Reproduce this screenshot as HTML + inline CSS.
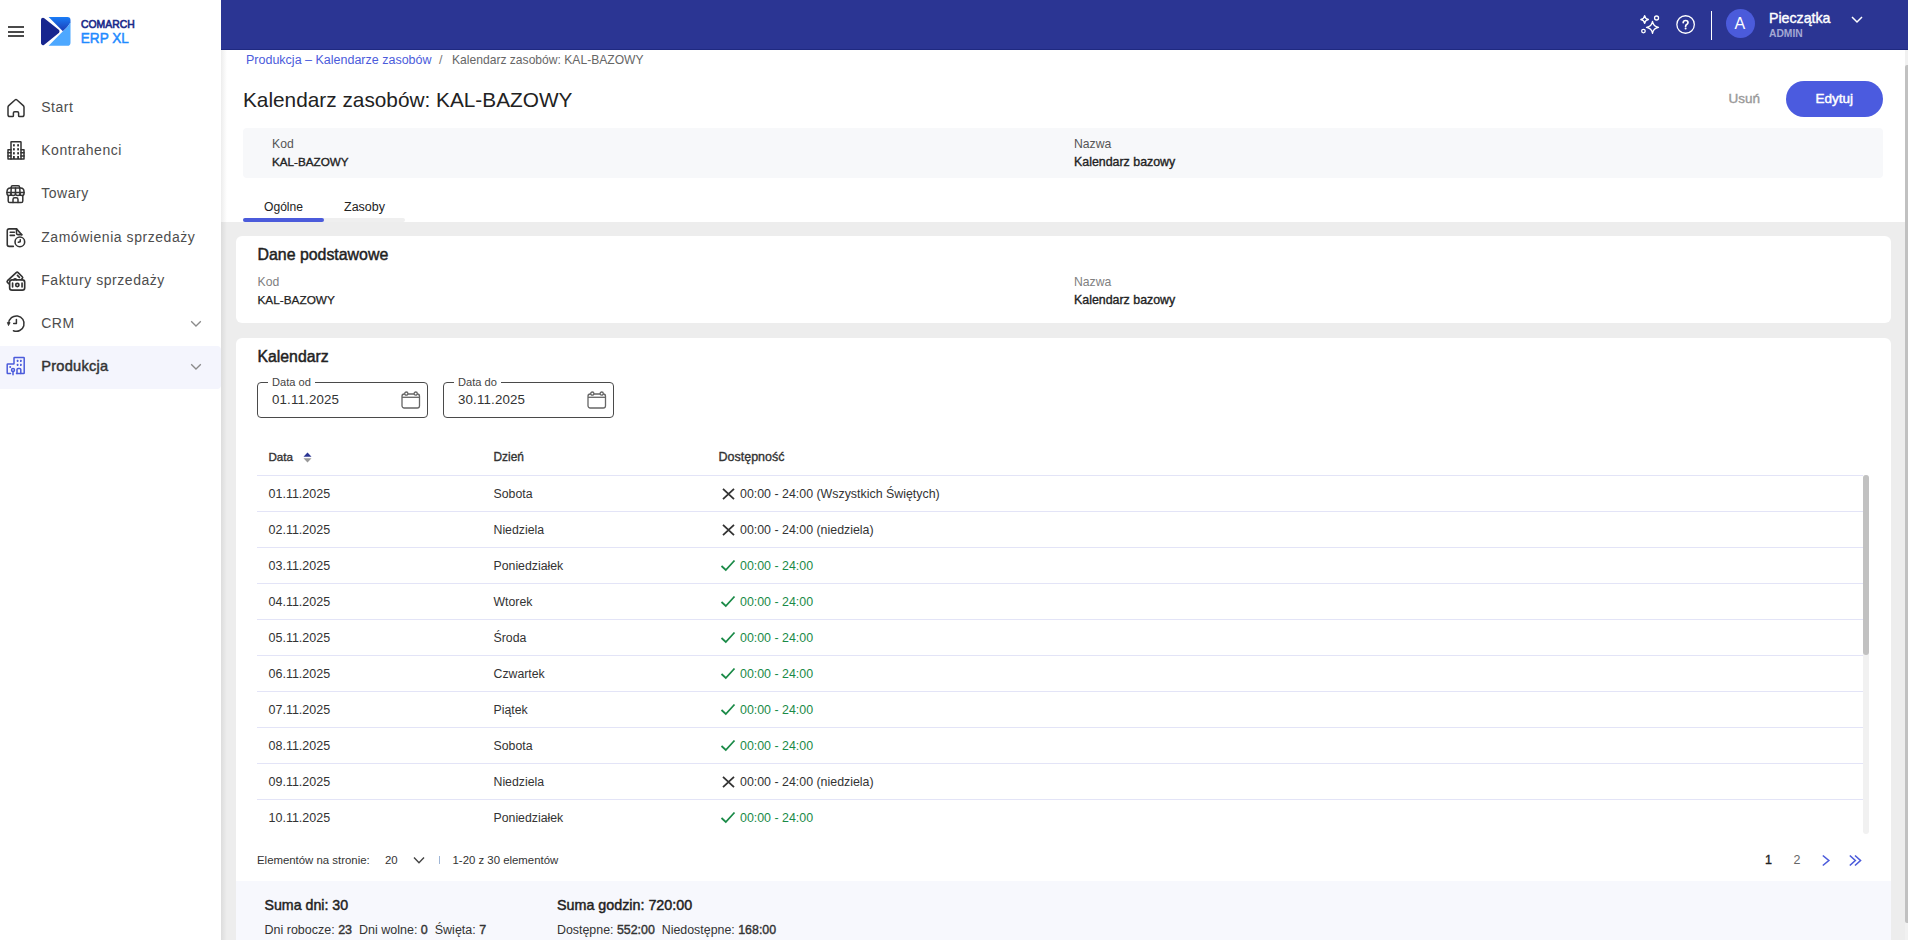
<!DOCTYPE html>
<html><head><meta charset="utf-8"><title>Kalendarz zasobów</title><style>*{margin:0;padding:0}
html,body{width:1908px;height:940px;overflow:hidden;background:#fff}
body{position:relative;font-family:"Liberation Sans",sans-serif}
.t{position:absolute;line-height:1;white-space:pre}
.r{position:absolute}
.s{position:absolute;overflow:visible}
b{font-weight:400;-webkit-text-stroke:0.4px #333}
</style></head><body>
<div class="r" style="left:0px;top:0px;width:221px;height:940px;background:#fff;"></div>
<div class="r" style="left:8px;top:26px;width:16px;height:2px;background:#4a4a4a;"></div>
<div class="r" style="left:8px;top:30.5px;width:16px;height:2px;background:#4a4a4a;"></div>
<div class="r" style="left:8px;top:35px;width:16px;height:2px;background:#4a4a4a;"></div>
<svg class="s" style="left:41px;top:17px;" width="30" height="29" viewBox="0 0 30 29">
<defs><linearGradient id="lg1" gradientUnits="userSpaceOnUse" x1="0" y1="0" x2="0" y2="14"><stop offset="0" stop-color="#1a7df7"/><stop offset="1" stop-color="#1b3cb6"/></linearGradient></defs>
<path d="M2 2.7 L16.5 14.4 L2 26.1 Z" fill="#17268f" stroke="#17268f" stroke-width="4" stroke-linejoin="round"/>
<path d="M7.6 0 L26.4 0 Q29.5 0 29.5 3.1 L29.5 5.4 Q27.2 9.6 21.9 14.3 Z" fill="url(#lg1)"/>
<path d="M21.9 14.3 Q27.2 9.6 29.5 5.4 L29.5 25.7 Q29.5 28.8 26.4 28.8 L7.6 28.8 Z" fill="#4da8ff"/>
</svg>
<div class="t" style="left:81.00px;top:20.00px;font-size:10.4px;font-weight:400;color:#1b2a8a;-webkit-text-stroke:0.6px #1b2a8a;transform:scaleY(1.05);transform-origin:0 86%;">COMARCH</div>
<div class="t" style="left:80.80px;top:32.00px;font-size:13.6px;font-weight:400;color:#1f8bff;-webkit-text-stroke:0.45px #1f8bff;transform:scaleY(1.1);transform-origin:0 86%;">ERP XL</div>
<div class="r" style="left:0px;top:346px;width:221px;height:43px;background:#f4f5fd;border-radius:0 4px 4px 0;"></div>
<div class="t" style="left:41.20px;top:100.00px;font-size:14px;font-weight:400;color:#4d4d4d;letter-spacing:0.55px;">Start</div>
<div class="t" style="left:41.20px;top:143.00px;font-size:14px;font-weight:400;color:#4d4d4d;letter-spacing:0.55px;">Kontrahenci</div>
<div class="t" style="left:41.20px;top:186.00px;font-size:14px;font-weight:400;color:#4d4d4d;letter-spacing:0.55px;">Towary</div>
<div class="t" style="left:41.20px;top:230.00px;font-size:14px;font-weight:400;color:#4d4d4d;letter-spacing:0.55px;">Zamówienia sprzedaży</div>
<div class="t" style="left:41.20px;top:273.00px;font-size:14px;font-weight:400;color:#4d4d4d;letter-spacing:0.55px;">Faktury sprzedaży</div>
<div class="t" style="left:41.20px;top:316.00px;font-size:14px;font-weight:400;color:#4d4d4d;letter-spacing:0.55px;">CRM</div>
<div class="t" style="left:41.20px;top:359.00px;font-size:14.6px;font-weight:400;color:#333;letter-spacing:0.25px;-webkit-text-stroke:0.45px #333;">Produkcja</div>
<svg class="s" style="left:190px;top:319.7px;" width="12" height="8" viewBox="0 0 12 8"><path d="M1.2 1.2 L6 6 L10.8 1.2" fill="none" stroke="#8a8a8a" stroke-width="1.3"/></svg>
<svg class="s" style="left:190px;top:362.8px;" width="12" height="8" viewBox="0 0 12 8"><path d="M1.2 1.2 L6 6 L10.8 1.2" fill="none" stroke="#8a8a8a" stroke-width="1.3"/></svg>
<svg class="s" style="left:6.5px;top:98.5px;" width="18" height="19" viewBox="0 0 18 19"><path d="M1 8.2 Q1 7.3 1.7 6.6 L8 1 Q9 0.2 10 1 L16.3 6.6 Q17 7.3 17 8.2 L17 15.8 Q17 17.6 15.2 17.6 L12.4 17.6 Q11.6 17.6 11.6 16.8 L11.6 14 Q11.6 12.8 10.4 12.8 L7.6 12.8 Q6.4 12.8 6.4 14 L6.4 16.8 Q6.4 17.6 5.6 17.6 L2.8 17.6 Q1 17.6 1 15.8 Z" fill="none" stroke="#333" stroke-width="1.5" stroke-linejoin="round" stroke-linecap="round"/></svg>
<svg class="s" style="left:7px;top:141px;" width="18" height="19" viewBox="0 0 18 19"><path d="M4 18 L4 1.2 Q4 0.8 4.4 0.8 L13.6 0.8 Q14 0.8 14 1.2 L14 18" fill="none" stroke="#333" stroke-width="1.5" stroke-linejoin="round" stroke-linecap="round"/>
<path d="M1 18 L1 8.8 L4 8.8 M14 8.8 L17 8.8 L17 18 L1 18" fill="none" stroke="#333" stroke-width="1.5" stroke-linejoin="round" stroke-linecap="round"/>
<g fill="#333"><rect x="6" y="3.2" width="1.8" height="2.2"/><rect x="10.2" y="3.2" width="1.8" height="2.2"/>
<rect x="6" y="7.2" width="1.8" height="2.2"/><rect x="10.2" y="7.2" width="1.8" height="2.2"/>
<rect x="6" y="11.2" width="1.8" height="2.2"/><rect x="10.2" y="11.2" width="1.8" height="2.2"/>
<rect x="6" y="15" width="1.8" height="3"/><rect x="10.2" y="15" width="1.8" height="3"/></g>
<path d="M1 11.8 L4 11.8 M1 15 L4 15 M14 11.8 L17 11.8 M14 15 L17 15" fill="none" stroke="#333" stroke-width="1.5" stroke-linejoin="round" stroke-linecap="round"/></svg>
<svg class="s" style="left:6px;top:185px;" width="19" height="19" viewBox="0 0 19 19"><path d="M5.2 2.8 L5.2 2.2 Q5.2 0.8 6.6 0.8 L12.2 0.8 Q13.6 0.8 13.6 2.2 L13.6 2.8" fill="none" stroke="#333" stroke-width="1.5" stroke-linejoin="round" stroke-linecap="round"/>
<path d="M1 8.5 L1 6.8 Q1 3 4.4 3 L14.6 3 Q18 3 18 6.8 L18 8.5 Q18 10.5 16 10.5 Q14 10.5 14 8.5 Q14 10.5 11.8 10.5 Q9.5 10.5 9.5 8.5 Q9.5 10.5 7.2 10.5 Q5 10.5 5 8.5 Q5 10.5 3 10.5 Q1 10.5 1 8.5 Z" fill="none" stroke="#333" stroke-width="1.5" stroke-linejoin="round" stroke-linecap="round"/>
<path d="M1 7.5 L18 7.5 M5.2 3 L5 8.5 M9.5 3 L9.5 8.5 M13.8 3 L14 8.5" fill="none" stroke="#333" stroke-width="1.5" stroke-linejoin="round" stroke-linecap="round"/>
<path d="M2.2 10.5 L2.2 16 Q2.2 17.6 3.8 17.6 L15.2 17.6 Q16.8 17.6 16.8 16 L16.8 10.5" fill="none" stroke="#333" stroke-width="1.5" stroke-linejoin="round" stroke-linecap="round"/>
<path d="M7 17.6 L7 14.5 Q7 12.8 8.7 12.8 L10.3 12.8 Q12 12.8 12 14.5 L12 17.6" fill="none" stroke="#333" stroke-width="1.5" stroke-linejoin="round" stroke-linecap="round"/></svg>
<svg class="s" style="left:6px;top:228px;" width="18.9" height="20" viewBox="0 0 18 19"><path d="M7 17.5 L3 17.5 Q1.2 17.5 1.2 15.7 L1.2 2.6 Q1.2 0.8 3 0.8 L10 0.8 L15 6.5" fill="none" stroke="#333" stroke-width="1.5" stroke-linejoin="round" stroke-linecap="round"/>
<path d="M10 0.8 L10 5 Q10 6.3 11.3 6.3 L15 6.3" fill="none" stroke="#333" stroke-width="1.5" stroke-linejoin="round" stroke-linecap="round"/>
<path d="M4 4 L8 4 M4 7 L8 7" fill="none" stroke="#333" stroke-width="1.5" stroke-linejoin="round" stroke-linecap="round"/>
<circle cx="13.2" cy="13.2" r="4.6" fill="none" stroke="#333" stroke-width="1.5" stroke-linejoin="round" stroke-linecap="round"/>
<path d="M13.6 11.3 L13.5 13 L11.8 13.5" fill="none" stroke="#333" stroke-width="1.5" stroke-linejoin="round" stroke-linecap="round"/></svg>
<svg class="s" style="left:6px;top:270.5px;" width="19.8" height="21" preserveAspectRatio="none" viewBox="0 0 18 19"><path d="M2.5 11.5 L1.4 10.4 Q0.6 9.6 1.4 8.8 L9.3 1.5 Q10.2 0.7 11 1.5 L14.8 5.2 Q15.6 6 14.8 6.8 L13.8 7.8" fill="none" stroke="#333" stroke-width="1.5" stroke-linejoin="round" stroke-linecap="round"/>
<path d="M10.4 4 L12.2 5.8" fill="none" stroke="#333" stroke-width="1.5" stroke-linejoin="round" stroke-linecap="round"/>
<path d="M7 7.8 Q8.2 6.5 9.6 7.8" fill="none" stroke="#333" stroke-width="1.5" stroke-linejoin="round" stroke-linecap="round"/>
<rect x="3.3" y="8" width="13.7" height="9.3" rx="2.2" fill="none" stroke="#333" stroke-width="1.5" stroke-linejoin="round" stroke-linecap="round"/>
<path d="M6 11 L6 14.4 M14.6 11 L14.6 14.4" fill="none" stroke="#333" stroke-width="1.5" stroke-linejoin="round" stroke-linecap="round"/>
<circle cx="10.3" cy="12.7" r="1.5" fill="none" stroke="#333" stroke-width="1.5" stroke-linejoin="round" stroke-linecap="round"/></svg>
<svg class="s" style="left:2px;top:308px;" width="30" height="30" viewBox="0 0 30 30"><path d="M6.7 15.4 A7.7 7.7 0 1 1 11.4 22.7" fill="none" stroke="#333" stroke-width="1.5" stroke-linecap="round"/>
<path d="M5.3 14.4 L8.1 14.6 L6.5 17.6 Z" fill="#333" stroke="#333" stroke-width="0.8" stroke-linejoin="round"/>
<path d="M14.4 11.6 L14.4 15.6 L11.7 15.6" fill="none" stroke="#333" stroke-width="1.5" stroke-linejoin="round" stroke-linecap="round"/></svg>
<svg class="s" style="left:6.3px;top:356px;" width="20" height="20" viewBox="0 0 20 20"><g fill="none" stroke="#4b5bdb" stroke-width="1.5" stroke-linejoin="round" stroke-linecap="round">
<path d="M4.5 17.6 L1.7 17.6 Q1.2 17.6 1.2 17 L1.2 8.6 Q1.2 8 1.8 8 L7.5 8 Q8 8 8 7.5 L8 2 Q8 1.4 8.6 1.4 L17.6 1.4 Q18.2 1.4 18.2 2 L18.2 17 Q18.2 17.6 17.6 17.6 L10.5 17.6"/>
<path d="M11 17.6 L11 13.6 Q11 12.4 12.2 12.4 L13.6 12.4 Q14.8 12.4 14.8 13.6 L14.8 17.6"/>
<circle cx="7" cy="14" r="1.5"/><path d="M7 15.5 L7 18.8"/></g>
<g fill="#4b5bdb"><rect x="10.8" y="3.8" width="1.6" height="2.2" rx="0.5"/><rect x="14" y="3.8" width="1.6" height="2.2" rx="0.5"/>
<rect x="10.8" y="7.8" width="1.6" height="2.2" rx="0.5"/><rect x="14" y="7.8" width="1.6" height="2.2" rx="0.5"/><circle cx="4.2" cy="11" r="1"/></g></svg>
<div class="r" style="left:221px;top:50px;width:1684px;height:172px;background:#fff;"></div>
<div class="r" style="left:221px;top:222px;width:1684px;height:718px;background:#ededed;"></div>
<div class="r" style="left:221px;top:50px;width:6px;height:890px;background:linear-gradient(to right, rgba(0,0,0,0.07), rgba(0,0,0,0));"></div>
<div class="r" style="left:1905px;top:50px;width:3px;height:890px;background:#f1f1f1;"></div>
<div class="r" style="left:1905px;top:65px;width:3px;height:858px;background:#c1c1c1;border-radius:2px 0 0 2px;"></div>
<div class="t" style="left:246.00px;top:54.00px;font-size:12.5px;font-weight:400;color:#4b5bdb;">Produkcja – Kalendarze zasobów</div>
<div class="t" style="left:439.00px;top:54.00px;font-size:12.5px;font-weight:400;color:#777;">/</div>
<div class="t" style="left:452.00px;top:54.00px;font-size:12.1px;font-weight:400;color:#666;">Kalendarz zasobów: KAL-BAZOWY</div>
<div class="t" style="left:243.00px;top:90.00px;font-size:20.8px;font-weight:400;color:#222;">Kalendarz zasobów: KAL-BAZOWY</div>
<div class="t" style="left:1728.50px;top:92.00px;font-size:13.5px;font-weight:400;color:#9a9a9a;-webkit-text-stroke:0.4px #9a9a9a;">Usuń</div>
<div class="r" style="left:1786px;top:81px;width:97px;height:36px;background:#4b5bdf;border-radius:18px;"></div>
<div class="t" style="left:1815.50px;top:92.00px;font-size:13.5px;font-weight:400;color:#fff;-webkit-text-stroke:0.45px #fff;">Edytuj</div>
<div class="r" style="left:243px;top:128px;width:1640px;height:50px;background:#f7f8fa;border-radius:4px;"></div>
<div class="t" style="left:272.00px;top:138.00px;font-size:12.2px;font-weight:400;color:#555;">Kod</div>
<div class="t" style="left:272.00px;top:156.00px;font-size:11.7px;font-weight:400;color:#222;-webkit-text-stroke:0.35px #222;">KAL-BAZOWY</div>
<div class="t" style="left:1074.00px;top:138.00px;font-size:12.2px;font-weight:400;color:#555;">Nazwa</div>
<div class="t" style="left:1074.00px;top:156.00px;font-size:12.4px;font-weight:400;color:#222;-webkit-text-stroke:0.35px #222;">Kalendarz bazowy</div>
<div class="t" style="left:264.00px;top:201.00px;font-size:12.1px;font-weight:400;color:#222;">Ogólne</div>
<div class="t" style="left:344.00px;top:201.00px;font-size:12.5px;font-weight:400;color:#222;">Zasoby</div>
<div class="r" style="left:243px;top:218px;width:162px;height:4px;background:#efefef;border-radius:2px;"></div>
<div class="r" style="left:243px;top:218px;width:81px;height:4px;background:#4b5bdb;border-radius:2px;"></div>
<div class="r" style="left:236px;top:236px;width:1655px;height:86.5px;background:#fff;border-radius:6px;"></div>
<div class="t" style="left:257.50px;top:247.00px;font-size:15.9px;font-weight:400;color:#222;-webkit-text-stroke:0.45px #222;">Dane podstawowe</div>
<div class="t" style="left:257.50px;top:276.00px;font-size:12.2px;font-weight:400;color:#808080;">Kod</div>
<div class="t" style="left:257.50px;top:295.00px;font-size:11.8px;font-weight:400;color:#222;-webkit-text-stroke:0.25px #222;">KAL-BAZOWY</div>
<div class="t" style="left:1074.00px;top:276.00px;font-size:12.2px;font-weight:400;color:#808080;">Nazwa</div>
<div class="t" style="left:1074.00px;top:294.00px;font-size:12.4px;font-weight:400;color:#222;-webkit-text-stroke:0.35px #222;">Kalendarz bazowy</div>
<div class="r" style="left:236px;top:338px;width:1655px;height:610px;background:#fff;border-radius:6px;"></div>
<div class="t" style="left:257.50px;top:349.00px;font-size:15.8px;font-weight:400;color:#222;-webkit-text-stroke:0.45px #222;">Kalendarz</div>
<div class="r" style="left:221px;top:0px;width:1687px;height:50px;background:#2b3593;"></div>
<div class="r" style="left:221px;top:49px;width:1687px;height:1px;background:#1f2980;"></div>
<svg class="s" style="left:1636px;top:11px;" width="28" height="28" viewBox="0 0 28 28"><g fill="none" stroke="#fff" stroke-width="1.3" stroke-linejoin="round"><path d="M8.64 4.7 Q9.172 7.968 12.440000000000001 8.5 Q9.172 9.032 8.64 12.3 Q8.108 9.032 4.840000000000001 8.5 Q8.108 7.968 8.64 4.7 Z"/><path d="M16.5 10.399999999999999 Q17.34 15.559999999999999 22.5 16.4 Q17.34 17.24 16.5 22.4 Q15.66 17.24 10.5 16.4 Q15.66 15.559999999999999 16.5 10.399999999999999 Z"/><circle cx="20.55" cy="7" r="2"/><circle cx="7.45" cy="20.1" r="1.8"/></g></svg>
<svg class="s" style="left:1670px;top:10px;" width="30" height="30" viewBox="0 0 30 30"><circle cx="15.6" cy="14.5" r="8.75" fill="none" stroke="#fff" stroke-width="1.3"/>
<path d="M13.2 12.6 Q13.3 10.5 15.6 10.5 Q18 10.5 18 12.6 Q18 13.8 16.7 14.5 Q15.6 15.1 15.6 16.4" fill="none" stroke="#fff" stroke-width="1.7" stroke-linecap="round"/>
<circle cx="15.6" cy="18.6" r="1" fill="#fff"/></svg>
<div class="r" style="left:1711px;top:11px;width:1px;height:29px;background:#ffffff;"></div>
<div class="r" style="left:1726px;top:9px;width:29px;height:29px;background:#4b5bdb;border-radius:50%;"></div>
<div class="t" style="left:1734.50px;top:16.00px;font-size:16px;font-weight:400;color:#fff;">A</div>
<div class="t" style="left:1769.00px;top:11.00px;font-size:14.2px;font-weight:400;color:#fff;-webkit-text-stroke:0.4px #fff;">Pieczątka</div>
<div class="t" style="left:1769.00px;top:29.00px;font-size:10.3px;font-weight:700;color:#a3a8d4;">ADMIN</div>
<svg class="s" style="left:1850px;top:15px;" width="14" height="10" viewBox="0 0 14 10"><path d="M2 2 L7 7 L12 2" fill="none" stroke="#fff" stroke-width="1.5"/></svg>
<div class="r" style="left:257px;top:382px;width:171px;height:36px;background:transparent;border:1.3px solid #4a4a4a;border-radius:4px;box-sizing:border-box;"></div>
<div class="r" style="left:268px;top:380px;width:47px;height:4px;background:#fff;"></div>
<div class="t" style="left:272.00px;top:377.00px;font-size:11.1px;font-weight:400;color:#444;">Data od</div>
<div class="t" style="left:272.00px;top:393.00px;font-size:13.3px;font-weight:400;color:#333;letter-spacing:0.15px;">01.11.2025</div>
<svg class="s" style="left:400.5px;top:390.5px;" width="20" height="18" viewBox="0 0 20 18"><g fill="none" stroke="#666" stroke-width="1.3" stroke-linejoin="round">
<rect x="1" y="3" width="17.5" height="14" rx="2.2"/><path d="M1 6.3 L18.5 6.3"/>
<circle cx="5.3" cy="2.6" r="1.6" fill="#fff"/><circle cx="14.7" cy="2.6" r="1.6" fill="#fff"/></g></svg>
<div class="r" style="left:443px;top:382px;width:171px;height:36px;background:transparent;border:1.3px solid #4a4a4a;border-radius:4px;box-sizing:border-box;"></div>
<div class="r" style="left:454px;top:380px;width:47px;height:4px;background:#fff;"></div>
<div class="t" style="left:458.00px;top:377.00px;font-size:11.1px;font-weight:400;color:#444;">Data do</div>
<div class="t" style="left:458.00px;top:393.00px;font-size:13.3px;font-weight:400;color:#333;letter-spacing:0.15px;">30.11.2025</div>
<svg class="s" style="left:586.5px;top:390.5px;" width="20" height="18" viewBox="0 0 20 18"><g fill="none" stroke="#666" stroke-width="1.3" stroke-linejoin="round">
<rect x="1" y="3" width="17.5" height="14" rx="2.2"/><path d="M1 6.3 L18.5 6.3"/>
<circle cx="5.3" cy="2.6" r="1.6" fill="#fff"/><circle cx="14.7" cy="2.6" r="1.6" fill="#fff"/></g></svg>
<div class="t" style="left:268.50px;top:451.00px;font-size:11.6px;font-weight:400;color:#333;-webkit-text-stroke:0.35px #333;">Data</div>
<svg class="s" style="left:303px;top:452px;" width="9" height="11" viewBox="0 0 9 11"><path d="M4.5 0.5 L8.5 4.8 L0.5 4.8 Z" fill="#2b3593"/><path d="M0.5 6.2 L8.5 6.2 L4.5 10.5 Z" fill="#999"/></svg>
<div class="t" style="left:493.50px;top:452.00px;font-size:11.9px;font-weight:400;color:#333;-webkit-text-stroke:0.35px #333;">Dzień</div>
<div class="t" style="left:718.50px;top:451.00px;font-size:12.5px;font-weight:400;color:#333;-webkit-text-stroke:0.35px #333;">Dostępność</div>
<div class="r" style="left:257px;top:475px;width:1606px;height:1px;background:#e3e4f7;"></div>
<div class="t" style="left:268.50px;top:488.00px;font-size:12.5px;font-weight:400;color:#333;">01.11.2025</div>
<div class="t" style="left:493.50px;top:488.00px;font-size:12.3px;font-weight:400;color:#333;">Sobota</div>
<svg class="s" style="left:722px;top:487.5px;" width="13" height="12" viewBox="0 0 13 12"><path d="M1 0.8 L12 11.2 M12 0.8 L1 11.2" fill="none" stroke="#333" stroke-width="1.8"/></svg>
<div class="t" style="left:740.00px;top:488.00px;font-size:12.4px;font-weight:400;color:#333;">00:00 - 24:00 (Wszystkich Świętych)</div>
<div class="r" style="left:257px;top:511px;width:1606px;height:1px;background:#e3e4f7;"></div>
<div class="t" style="left:268.50px;top:524.00px;font-size:12.5px;font-weight:400;color:#333;">02.11.2025</div>
<div class="t" style="left:493.50px;top:524.00px;font-size:12.3px;font-weight:400;color:#333;">Niedziela</div>
<svg class="s" style="left:722px;top:523.5px;" width="13" height="12" viewBox="0 0 13 12"><path d="M1 0.8 L12 11.2 M12 0.8 L1 11.2" fill="none" stroke="#333" stroke-width="1.8"/></svg>
<div class="t" style="left:740.00px;top:524.00px;font-size:12.4px;font-weight:400;color:#333;">00:00 - 24:00 (niedziela)</div>
<div class="r" style="left:257px;top:547px;width:1606px;height:1px;background:#e3e4f7;"></div>
<div class="t" style="left:268.50px;top:560.00px;font-size:12.5px;font-weight:400;color:#333;">03.11.2025</div>
<div class="t" style="left:493.50px;top:560.00px;font-size:12.3px;font-weight:400;color:#333;">Poniedziałek</div>
<svg class="s" style="left:720px;top:559px;" width="16" height="13" viewBox="0 0 16 13"><path d="M1.5 7 L5.8 11 L14.5 1.5" fill="none" stroke="#1a8a47" stroke-width="1.8"/></svg>
<div class="t" style="left:740.00px;top:560.00px;font-size:12.4px;font-weight:400;color:#1a8a47;">00:00 - 24:00</div>
<div class="r" style="left:257px;top:583px;width:1606px;height:1px;background:#e3e4f7;"></div>
<div class="t" style="left:268.50px;top:596.00px;font-size:12.5px;font-weight:400;color:#333;">04.11.2025</div>
<div class="t" style="left:493.50px;top:596.00px;font-size:12.3px;font-weight:400;color:#333;">Wtorek</div>
<svg class="s" style="left:720px;top:595px;" width="16" height="13" viewBox="0 0 16 13"><path d="M1.5 7 L5.8 11 L14.5 1.5" fill="none" stroke="#1a8a47" stroke-width="1.8"/></svg>
<div class="t" style="left:740.00px;top:596.00px;font-size:12.4px;font-weight:400;color:#1a8a47;">00:00 - 24:00</div>
<div class="r" style="left:257px;top:619px;width:1606px;height:1px;background:#e3e4f7;"></div>
<div class="t" style="left:268.50px;top:632.00px;font-size:12.5px;font-weight:400;color:#333;">05.11.2025</div>
<div class="t" style="left:493.50px;top:632.00px;font-size:12.3px;font-weight:400;color:#333;">Środa</div>
<svg class="s" style="left:720px;top:631px;" width="16" height="13" viewBox="0 0 16 13"><path d="M1.5 7 L5.8 11 L14.5 1.5" fill="none" stroke="#1a8a47" stroke-width="1.8"/></svg>
<div class="t" style="left:740.00px;top:632.00px;font-size:12.4px;font-weight:400;color:#1a8a47;">00:00 - 24:00</div>
<div class="r" style="left:257px;top:655px;width:1606px;height:1px;background:#e3e4f7;"></div>
<div class="t" style="left:268.50px;top:668.00px;font-size:12.5px;font-weight:400;color:#333;">06.11.2025</div>
<div class="t" style="left:493.50px;top:668.00px;font-size:12.3px;font-weight:400;color:#333;">Czwartek</div>
<svg class="s" style="left:720px;top:667px;" width="16" height="13" viewBox="0 0 16 13"><path d="M1.5 7 L5.8 11 L14.5 1.5" fill="none" stroke="#1a8a47" stroke-width="1.8"/></svg>
<div class="t" style="left:740.00px;top:668.00px;font-size:12.4px;font-weight:400;color:#1a8a47;">00:00 - 24:00</div>
<div class="r" style="left:257px;top:691px;width:1606px;height:1px;background:#e3e4f7;"></div>
<div class="t" style="left:268.50px;top:704.00px;font-size:12.5px;font-weight:400;color:#333;">07.11.2025</div>
<div class="t" style="left:493.50px;top:704.00px;font-size:12.3px;font-weight:400;color:#333;">Piątek</div>
<svg class="s" style="left:720px;top:703px;" width="16" height="13" viewBox="0 0 16 13"><path d="M1.5 7 L5.8 11 L14.5 1.5" fill="none" stroke="#1a8a47" stroke-width="1.8"/></svg>
<div class="t" style="left:740.00px;top:704.00px;font-size:12.4px;font-weight:400;color:#1a8a47;">00:00 - 24:00</div>
<div class="r" style="left:257px;top:727px;width:1606px;height:1px;background:#e3e4f7;"></div>
<div class="t" style="left:268.50px;top:740.00px;font-size:12.5px;font-weight:400;color:#333;">08.11.2025</div>
<div class="t" style="left:493.50px;top:740.00px;font-size:12.3px;font-weight:400;color:#333;">Sobota</div>
<svg class="s" style="left:720px;top:739px;" width="16" height="13" viewBox="0 0 16 13"><path d="M1.5 7 L5.8 11 L14.5 1.5" fill="none" stroke="#1a8a47" stroke-width="1.8"/></svg>
<div class="t" style="left:740.00px;top:740.00px;font-size:12.4px;font-weight:400;color:#1a8a47;">00:00 - 24:00</div>
<div class="r" style="left:257px;top:763px;width:1606px;height:1px;background:#e3e4f7;"></div>
<div class="t" style="left:268.50px;top:776.00px;font-size:12.5px;font-weight:400;color:#333;">09.11.2025</div>
<div class="t" style="left:493.50px;top:776.00px;font-size:12.3px;font-weight:400;color:#333;">Niedziela</div>
<svg class="s" style="left:722px;top:775.5px;" width="13" height="12" viewBox="0 0 13 12"><path d="M1 0.8 L12 11.2 M12 0.8 L1 11.2" fill="none" stroke="#333" stroke-width="1.8"/></svg>
<div class="t" style="left:740.00px;top:776.00px;font-size:12.4px;font-weight:400;color:#333;">00:00 - 24:00 (niedziela)</div>
<div class="r" style="left:257px;top:799px;width:1606px;height:1px;background:#e3e4f7;"></div>
<div class="t" style="left:268.50px;top:812.00px;font-size:12.5px;font-weight:400;color:#333;">10.11.2025</div>
<div class="t" style="left:493.50px;top:812.00px;font-size:12.3px;font-weight:400;color:#333;">Poniedziałek</div>
<svg class="s" style="left:720px;top:811px;" width="16" height="13" viewBox="0 0 16 13"><path d="M1.5 7 L5.8 11 L14.5 1.5" fill="none" stroke="#1a8a47" stroke-width="1.8"/></svg>
<div class="t" style="left:740.00px;top:812.00px;font-size:12.4px;font-weight:400;color:#1a8a47;">00:00 - 24:00</div>
<div class="r" style="left:1863px;top:475px;width:6px;height:359px;background:#f1f1f1;border-radius:3px;"></div>
<div class="r" style="left:1863px;top:475px;width:6px;height:180px;background:#c1c1c1;border-radius:3px;"></div>
<div class="t" style="left:257.00px;top:855.00px;font-size:11.4px;font-weight:400;color:#333;">Elementów na stronie:</div>
<div class="t" style="left:385.00px;top:855.00px;font-size:11.4px;font-weight:400;color:#333;">20</div>
<svg class="s" style="left:413px;top:856px;" width="12" height="9" viewBox="0 0 12 9"><path d="M1 1.5 L6 6.8 L11 1.5" fill="none" stroke="#444" stroke-width="1.4"/></svg>
<div class="r" style="left:439px;top:856px;width:1px;height:8px;background:#9fb6d6;"></div>
<div class="t" style="left:452.50px;top:855.00px;font-size:11.4px;font-weight:400;color:#333;">1-20 z 30 elementów</div>
<div class="t" style="left:1765.00px;top:854.00px;font-size:12.5px;font-weight:400;color:#222;-webkit-text-stroke:0.35px #222;">1</div>
<div class="t" style="left:1793.50px;top:854.00px;font-size:12.5px;font-weight:400;color:#666;">2</div>
<svg class="s" style="left:1821px;top:854px;" width="10" height="13" viewBox="0 0 10 13"><path d="M1.8 1.5 L7.8 6.5 L1.8 11.5" fill="none" stroke="#4b5bdb" stroke-width="1.6"/></svg>
<svg class="s" style="left:1848px;top:854px;" width="15" height="13" viewBox="0 0 15 13"><path d="M1.8 1.5 L7.3 6.5 L1.8 11.5 M7 1.5 L12.5 6.5 L7 11.5" fill="none" stroke="#4b5bdb" stroke-width="1.6"/></svg>
<div class="r" style="left:236px;top:881px;width:1655px;height:59px;background:#f7f8fd;"></div>
<div class="t" style="left:264.50px;top:898.00px;font-size:14.2px;font-weight:400;color:#222;-webkit-text-stroke:0.45px #222;">Suma dni: 30</div>
<div class="t" style="left:264.50px;top:924.00px;font-size:12.5px;font-weight:400;color:#333;">Dni robocze: <b>23</b>&nbsp; Dni wolne: <b>0</b>&nbsp; Święta: <b>7</b></div>
<div class="t" style="left:557.00px;top:898.00px;font-size:14.3px;font-weight:400;color:#222;-webkit-text-stroke:0.45px #222;">Suma godzin: 720:00</div>
<div class="t" style="left:557.00px;top:924.00px;font-size:12.4px;font-weight:400;color:#333;">Dostępne: <b>552:00</b>&nbsp; Niedostępne: <b>168:00</b></div>
</body></html>
